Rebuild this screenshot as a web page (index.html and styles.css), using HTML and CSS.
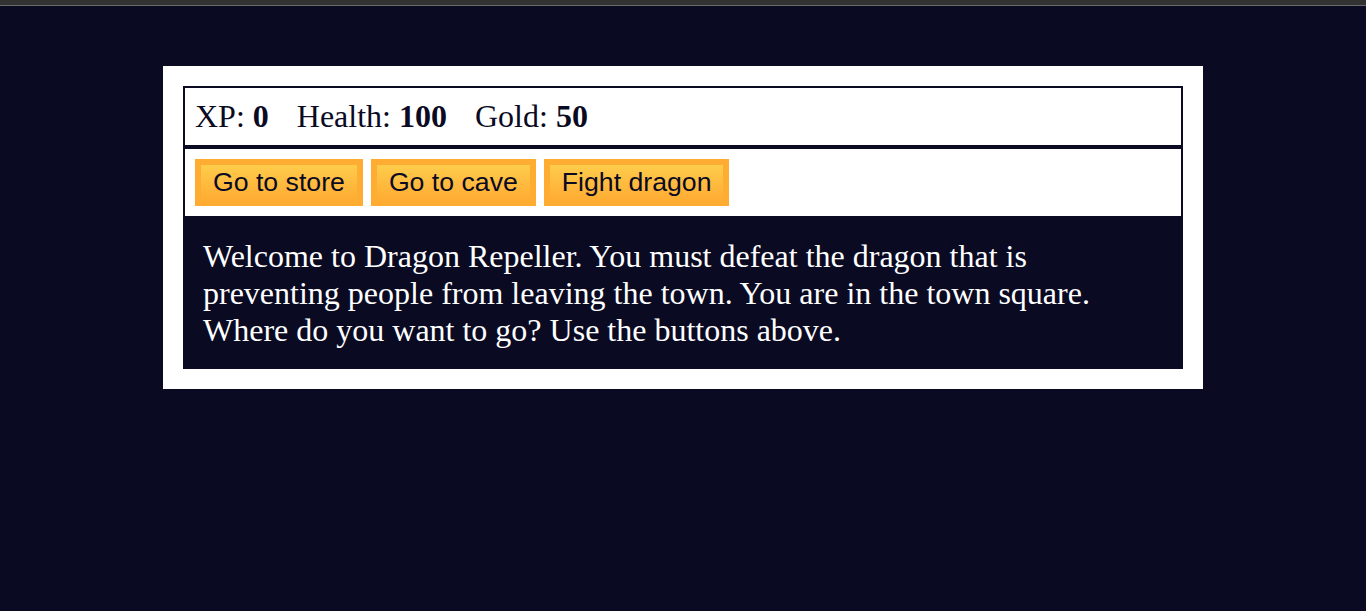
FILE: index.html
```html
<!DOCTYPE html>
<html lang="en">
<head>
<meta charset="utf-8">
<title>RPG - Dragon Repeller</title>
<link rel="stylesheet" href="styles.css">
</head>
<body>
<div class="chrome"></div>
<div class="game">
  <div class="stats">
    <span class="stat">XP: <strong>0</strong></span>
    <span class="stat">Health: <strong>100</strong></span>
    <span class="stat">Gold: <strong>50</strong></span>
  </div>
  <div class="controls">
    <button class="btn">Go to store</button>
    <button class="btn">Go to cave</button>
    <button class="btn">Fight dragon</button>
  </div>
  <div class="text">
    Welcome to Dragon Repeller. You must defeat the dragon that is preventing people from leaving the town. You are in the town square. Where do you want to go? Use the buttons above.
  </div>
</div>
</body>
</html>
```
FILE: styles.css
```css
html, body {
  margin: 0;
  padding: 0;
}
body {
  background-color: #0a0a23;
  font-family: "Liberation Serif", "Times New Roman", serif;
  font-size: 32px;
  min-height: 611px;
}
.chrome {
  height: 5px;
  background-color: #323232;
  border-bottom: 1px solid #6b6b6b;
}
.game {
  width: 1000px;
  background-color: #ffffff;
  color: #ffffff;
  margin: 60px auto 0;
  padding: 20px;
}
.stats, .controls {
  border: 2px solid #0a0a23;
  padding: 10px;
  color: #0a0a23;
}
.stat {
  padding-right: 20px;
}
.btn {
  cursor: pointer;
  color: #0a0a23;
  background-color: #feac32;
  background-image: linear-gradient(#fecc4c, #ffac33);
  border: 6px solid #feac32;
  font-family: "Liberation Sans", Arial, sans-serif;
  font-size: 26.667px;
  padding: 2px 12px;
  margin: 0;
}
.text {
  background-color: #0a0a23;
  color: #ffffff;
  padding: 20px;
}
```
